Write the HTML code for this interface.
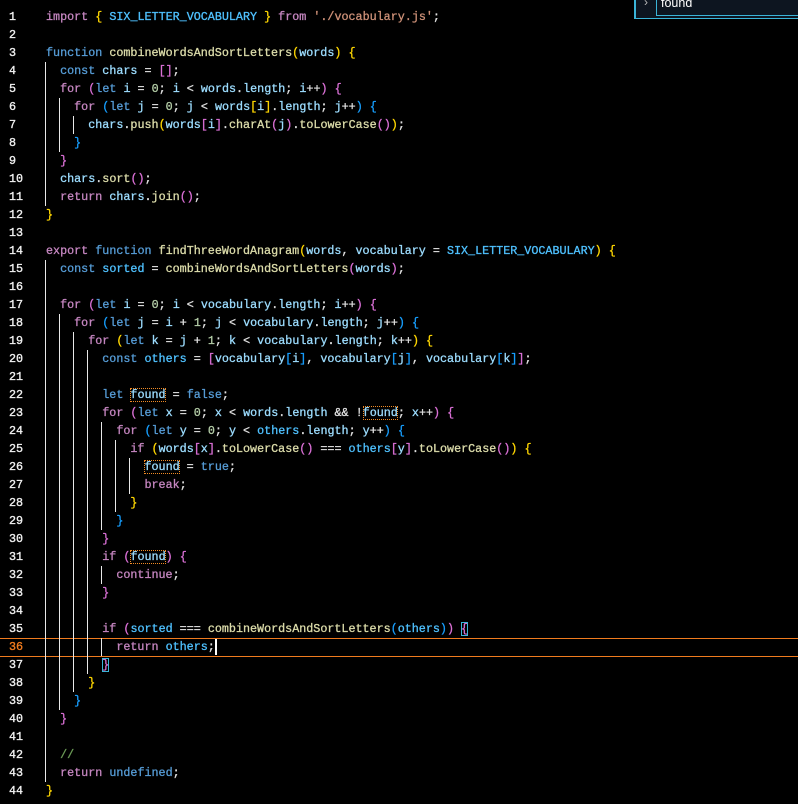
<!DOCTYPE html>
<html><head><meta charset="utf-8"><style>
html,body{margin:0;padding:0;background:#000;width:798px;height:804px;overflow:hidden}
body{position:relative;font-family:"Liberation Mono",monospace;font-size:11.73px;color:#e0e0e0}
.ln{position:absolute;left:9px;width:30px;color:#f0f0f0;height:18px;line-height:18px;-webkit-text-stroke:0.35px currentColor}
.l{position:absolute;left:46px;height:18px;line-height:18px;white-space:pre;-webkit-text-stroke:0.3px currentColor}
.l span{-webkit-text-stroke:0.3px currentColor}
.k{color:#569cd6}.c{color:#c586c0}.v{color:#9cdcfe}.f{color:#dcdcaa}.n{color:#b5cea8}.s{color:#ce9178}.o{color:#4fc1ff}.g{color:#6a9955}
.b1{color:#ffd700}.b2{color:#da70d6}.b3{color:#179fff}
.fd{outline:1px dotted #f08a24;outline-offset:-1px}
.bm{outline:1px solid #3ab4d8;outline-offset:-1px}
.gd{position:absolute;width:1px;background:#e8e8e8}
</style></head><body>
<div style="position:absolute;left:0;top:638px;width:798px;height:17px;border-top:1px solid #f07b1e;border-bottom:1px solid #f07b1e"></div>
<div style="position:absolute;left:634px;top:0;width:164px;height:18px;background:#0d1520;border-left:2px solid #3ab4d8;border-bottom:1px solid #3ab4d8"></div>
<div style="position:absolute;left:656px;top:0;width:142px;height:15px;border-left:1px solid #3ab4d8;border-bottom:1px solid #3ab4d8"></div>
<div style="position:absolute;left:644px;top:-5px;color:#bbb;font-family:'Liberation Sans',sans-serif;font-size:12px">›</div>
<div style="position:absolute;left:661px;top:-4px;color:#fff;font-family:'Liberation Sans',sans-serif;font-size:12.5px">found</div>
<div id="g"></div>
<div id="c"></div>
<script>
var L=[
'<span class="c">import</span> <span class="b1">{</span> <span class="o">SIX_LETTER_VOCABULARY</span> <span class="b1">}</span> <span class="c">from</span> <span class="s">\'./vocabulary.js\'</span>;',
'',
'<span class="k">function</span> <span class="f">combineWordsAndSortLetters</span><span class="b1">(</span><span class="v">words</span><span class="b1">)</span> <span class="b1">{</span>',
'  <span class="k">const</span> <span class="v">chars</span> = <span class="b2">[]</span>;',
'  <span class="c">for</span> <span class="b2">(</span><span class="k">let</span> <span class="v">i</span> = <span class="n">0</span>; <span class="v">i</span> &lt; <span class="v">words</span>.<span class="v">length</span>; <span class="v">i</span>++<span class="b2">)</span> <span class="b2">{</span>',
'    <span class="c">for</span> <span class="b3">(</span><span class="k">let</span> <span class="v">j</span> = <span class="n">0</span>; <span class="v">j</span> &lt; <span class="v">words</span><span class="b1">[</span><span class="v">i</span><span class="b1">]</span>.<span class="v">length</span>; <span class="v">j</span>++<span class="b3">)</span> <span class="b3">{</span>',
'      <span class="v">chars</span>.<span class="f">push</span><span class="b1">(</span><span class="v">words</span><span class="b2">[</span><span class="v">i</span><span class="b2">]</span>.<span class="f">charAt</span><span class="b2">(</span><span class="v">j</span><span class="b2">)</span>.<span class="f">toLowerCase</span><span class="b2">()</span><span class="b1">)</span>;',
'    <span class="b3">}</span>',
'  <span class="b2">}</span>',
'  <span class="v">chars</span>.<span class="f">sort</span><span class="b2">()</span>;',
'  <span class="c">return</span> <span class="v">chars</span>.<span class="f">join</span><span class="b2">()</span>;',
'<span class="b1">}</span>',
'',
'<span class="c">export</span> <span class="k">function</span> <span class="f">findThreeWordAnagram</span><span class="b1">(</span><span class="v">words</span>, <span class="v">vocabulary</span> = <span class="o">SIX_LETTER_VOCABULARY</span><span class="b1">)</span> <span class="b1">{</span>',
'  <span class="k">const</span> <span class="o">sorted</span> = <span class="f">combineWordsAndSortLetters</span><span class="b2">(</span><span class="v">words</span><span class="b2">)</span>;',
'',
'  <span class="c">for</span> <span class="b2">(</span><span class="k">let</span> <span class="v">i</span> = <span class="n">0</span>; <span class="v">i</span> &lt; <span class="v">vocabulary</span>.<span class="v">length</span>; <span class="v">i</span>++<span class="b2">)</span> <span class="b2">{</span>',
'    <span class="c">for</span> <span class="b3">(</span><span class="k">let</span> <span class="v">j</span> = <span class="v">i</span> + <span class="n">1</span>; <span class="v">j</span> &lt; <span class="v">vocabulary</span>.<span class="v">length</span>; <span class="v">j</span>++<span class="b3">)</span> <span class="b3">{</span>',
'      <span class="c">for</span> <span class="b1">(</span><span class="k">let</span> <span class="v">k</span> = <span class="v">j</span> + <span class="n">1</span>; <span class="v">k</span> &lt; <span class="v">vocabulary</span>.<span class="v">length</span>; <span class="v">k</span>++<span class="b1">)</span> <span class="b1">{</span>',
'        <span class="k">const</span> <span class="o">others</span> = <span class="b2">[</span><span class="v">vocabulary</span><span class="b3">[</span><span class="v">i</span><span class="b3">]</span>, <span class="v">vocabulary</span><span class="b3">[</span><span class="v">j</span><span class="b3">]</span>, <span class="v">vocabulary</span><span class="b3">[</span><span class="v">k</span><span class="b3">]</span><span class="b2">]</span>;',
'',
'        <span class="k">let</span> <span class="v fd">found</span> = <span class="k">false</span>;',
'        <span class="c">for</span> <span class="b2">(</span><span class="k">let</span> <span class="v">x</span> = <span class="n">0</span>; <span class="v">x</span> &lt; <span class="v">words</span>.<span class="v">length</span> &amp;&amp; !<span class="v fd">found</span>; <span class="v">x</span>++<span class="b2">)</span> <span class="b2">{</span>',
'          <span class="c">for</span> <span class="b3">(</span><span class="k">let</span> <span class="v">y</span> = <span class="n">0</span>; <span class="v">y</span> &lt; <span class="o">others</span>.<span class="v">length</span>; <span class="v">y</span>++<span class="b3">)</span> <span class="b3">{</span>',
'            <span class="c">if</span> <span class="b1">(</span><span class="v">words</span><span class="b2">[</span><span class="v">x</span><span class="b2">]</span>.<span class="f">toLowerCase</span><span class="b2">()</span> === <span class="o">others</span><span class="b2">[</span><span class="v">y</span><span class="b2">]</span>.<span class="f">toLowerCase</span><span class="b2">()</span><span class="b1">)</span> <span class="b1">{</span>',
'              <span class="v fd">found</span> = <span class="k">true</span>;',
'              <span class="c">break</span>;',
'            <span class="b1">}</span>',
'          <span class="b3">}</span>',
'        <span class="b2">}</span>',
'        <span class="c">if</span> <span class="b2">(</span><span class="v fd">found</span><span class="b2">)</span> <span class="b2">{</span>',
'          <span class="c">continue</span>;',
'        <span class="b2">}</span>',
'',
'        <span class="c">if</span> <span class="b2">(</span><span class="o">sorted</span> === <span class="f">combineWordsAndSortLetters</span><span class="b3">(</span><span class="o">others</span><span class="b3">)</span><span class="b2">)</span> <span class="b2 bm">{</span>',
'          <span class="c">return</span> <span class="o">others</span>;<span style="display:inline-block;width:2px;height:16px;background:#fff;vertical-align:middle"></span>',
'        <span class="b2 bm">}</span>',
'      <span class="b1">}</span>',
'    <span class="b3">}</span>',
'  <span class="b2">}</span>',
'',
'  <span class="g">//</span>',
'  <span class="c">return</span> <span class="k">undefined</span>;',
'<span class="b1">}</span>'
];
var h='';
for(var i=0;i<L.length;i++){var t=8+i*18;
h+='<div class="ln" style="top:'+t+'px;'+(i==35?'color:#f07b1e':'')+'">'+(i+1)+'</div><div class="l" style="top:'+t+'px">'+L[i]+'</div>';}
document.getElementById('c').innerHTML=h;
var G=[[0,4,11],[0,15,43],[1,6,8],[1,18,39],[2,7,7],[2,19,38],[3,20,37],[4,24,29],[4,32,32],[4,36,36],[5,25,28],[6,26,27]];
var g='';G.forEach(function(a){var x=Math.round(45+14.08*a[0]);g+='<div class="gd" style="left:'+x+'px;top:'+(8+(a[1]-1)*18)+'px;height:'+((a[2]-a[1]+1)*18)+'px"></div>';});
document.getElementById('g').innerHTML=g;
</script>
</body></html>
